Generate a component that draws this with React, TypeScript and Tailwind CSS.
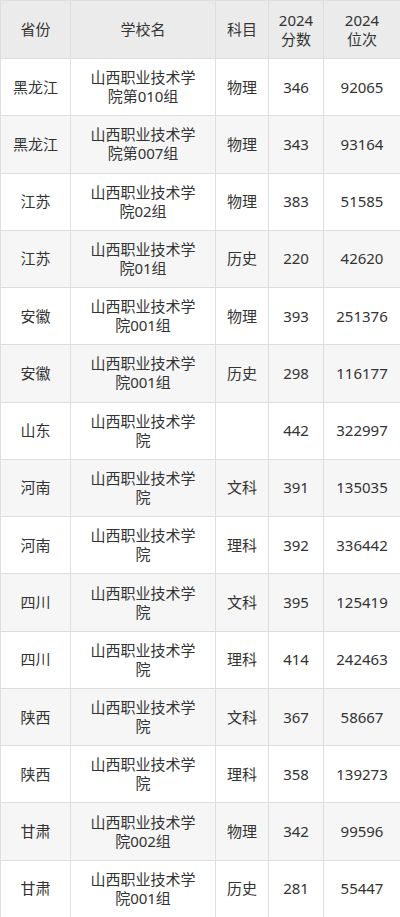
import React from "react";

const rows: [string, string, string, string, string][] = [
  ["黑龙江", "山西职业技术学院第010组", "物理", "346", "92065"],
  ["黑龙江", "山西职业技术学院第007组", "物理", "343", "93164"],
  ["江苏", "山西职业技术学院02组", "物理", "383", "51585"],
  ["江苏", "山西职业技术学院01组", "历史", "220", "42620"],
  ["安徽", "山西职业技术学院001组", "物理", "393", "251376"],
  ["安徽", "山西职业技术学院001组", "历史", "298", "116177"],
  ["山东", "山西职业技术学院", "", "442", "322997"],
  ["河南", "山西职业技术学院", "文科", "391", "135035"],
  ["河南", "山西职业技术学院", "理科", "392", "336442"],
  ["四川", "山西职业技术学院", "文科", "395", "125419"],
  ["四川", "山西职业技术学院", "理科", "414", "242463"],
  ["陕西", "山西职业技术学院", "文科", "367", "58667"],
  ["陕西", "山西职业技术学院", "理科", "358", "139273"],
  ["甘肃", "山西职业技术学院002组", "物理", "342", "99596"],
  ["甘肃", "山西职业技术学院001组", "历史", "281", "55447"],
];

export default function App() {
  return (
    <div
      className="w-[400px] h-[917px] bg-white text-[#333] text-[15px] leading-[19px]"
      style={{ fontFamily: '"Noto Sans", "Noto Sans CJK SC", sans-serif' }}
    >
      <table className="table-fixed border-collapse w-[400px]">
        <colgroup>
          <col className="w-[70px]" />
          <col className="w-[145px]" />
          <col className="w-[53px]" />
          <col className="w-[55px]" />
          <col className="w-[77px]" />
        </colgroup>
        <thead>
          <tr className="h-[58px] bg-[#ebebeb]">
            <th className="border border-[#dedede] font-normal text-center">省份</th>
            <th className="border border-[#dedede] font-normal text-center">学校名</th>
            <th className="border border-[#dedede] font-normal text-center">科目</th>
            <th className="border border-[#dedede] font-normal text-center">
              2024
              <br />
              分数
            </th>
            <th className="border border-[#dedede] font-normal text-center">
              2024
              <br />
              位次
            </th>
          </tr>
        </thead>
        <tbody>
          {rows.map((r, i) => (
            <tr key={i} className={`h-[57.27px] ${i % 2 === 1 ? "bg-[#f6f6f6]" : "bg-white"}`}>
              <td className="border border-[#dedede] text-center">{r[0]}</td>
              <td className="border border-[#dedede] text-center px-[16px] break-all">{r[1]}</td>
              <td className="border border-[#dedede] text-center">{r[2]}</td>
              <td className="border border-[#dedede] text-center">{r[3]}</td>
              <td className="border border-[#dedede] text-center">{r[4]}</td>
            </tr>
          ))}
        </tbody>
      </table>
    </div>
  );
}
